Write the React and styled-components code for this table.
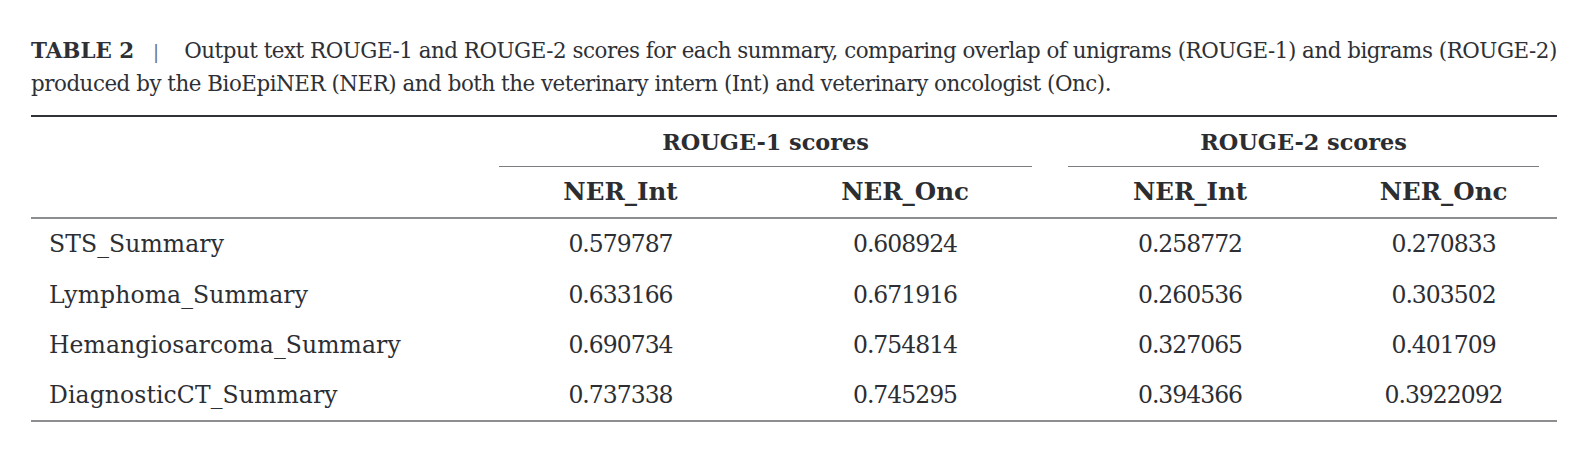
import React from "react";
import styled, { createGlobalStyle } from "styled-components";

const Global = createGlobalStyle`
  html, body { margin: 0; padding: 0; background: #ffffff; }
  body { font-family: "DejaVu Serif", serif; color: #2c2e33; }
`;

const Page = styled.div`
  width: 1592px;
  box-sizing: border-box;
  padding: 35px 35px 0 31px;
`;

const Caption = styled.p`
  margin: 0 0 15px 0;
  font-size: 21.4px;
  line-height: 32px;
  letter-spacing: -0.47px;
  color: #2e3035;
`;

const Label = styled.span`
  font-weight: bold;
  letter-spacing: 0;
`;

const Pipe = styled.span`
  margin: 0 25px 0 19px;
  color: #6a6c70;
  font-size: 18px;
  letter-spacing: 0;
`;

const NoBreak = styled.span`
  white-space: nowrap;
`;

const Table = styled.table`
  width: 1526px;
  table-layout: fixed;
  border-collapse: separate;
  border-spacing: 0;
`;

const Col = styled.col`
  width: ${(p) => p.$w}px;
`;

const HeadCell = styled.th`
  box-sizing: border-box;
  padding: 0 18px;
  font-weight: bold;
  text-align: center;
  color: #2b2d31;
  ${(p) => (p.$top ? "border-top: 2px solid #2f3237;" : "")}
  ${(p) => (p.$bottom ? "border-bottom: 2px solid #8d8e91;" : "")}
`;

const GroupCell = styled(HeadCell)`
  padding: 12px 18px 0 18px;
  vertical-align: top;
`;

const GroupTitle = styled.div`
  font-size: 22.4px;
  line-height: 27px;
  padding-bottom: 10px;
  border-bottom: 1px solid #7c7d80;
`;

const SubCell = styled(HeadCell)`
  font-size: 24.5px;
  line-height: 27px;
  padding: 11px 18px 12px 18px;
  vertical-align: bottom;
`;

const Cell = styled.td`
  box-sizing: border-box;
  padding: 12.3px 18px 11px 18px;
  font-size: 23.5px;
  line-height: 27px;
  color: #2c2e33;
  text-align: ${(p) => (p.$left ? "left" : "center")};
  letter-spacing: ${(p) => (p.$left ? "0.1px" : "-1px")};
  white-space: nowrap;
  ${(p) => (p.$last ? "border-bottom: 2px solid #8d8e91;" : "")}
`;

const rows = [
  ["STS_Summary", "0.579787", "0.608924", "0.258772", "0.270833"],
  ["Lymphoma_Summary", "0.633166", "0.671916", "0.260536", "0.303502"],
  ["Hemangiosarcoma_Summary", "0.690734", "0.754814", "0.327065", "0.401709"],
  ["DiagnosticCT_Summary", "0.737338", "0.745295", "0.394366", "0.3922092"],
];

export default function App() {
  return (
    <>
      <Global />
      <Page>
        <Caption>
          <Label>TABLE 2</Label>
          <Pipe>|</Pipe>
          Output text <NoBreak>ROUGE-1</NoBreak> and <NoBreak>ROUGE-2</NoBreak>{" "}
          scores for each summary, comparing overlap of unigrams{" "}
          <NoBreak>(ROUGE-1)</NoBreak> and bigrams <NoBreak>(ROUGE-2)</NoBreak>{" "}
          produced by the BioEpiNER (NER) and both the veterinary intern (Int)
          and veterinary oncologist (Onc).
        </Caption>
        <Table>
          <colgroup>
            <Col $w={450} />
            <Col $w={279} />
            <Col $w={290} />
            <Col $w={280} />
            <Col $w={227} />
          </colgroup>
          <thead>
            <tr>
              <HeadCell rowSpan={2} $top $bottom />
              <GroupCell colSpan={2} $top>
                <GroupTitle>ROUGE-1 scores</GroupTitle>
              </GroupCell>
              <GroupCell colSpan={2} $top>
                <GroupTitle>ROUGE-2 scores</GroupTitle>
              </GroupCell>
            </tr>
            <tr>
              <SubCell $bottom>NER_Int</SubCell>
              <SubCell $bottom>NER_Onc</SubCell>
              <SubCell $bottom>NER_Int</SubCell>
              <SubCell $bottom>NER_Onc</SubCell>
            </tr>
          </thead>
          <tbody>
            {rows.map((r, i) => (
              <tr key={r[0]}>
                {r.map((v, j) => (
                  <Cell key={j} $left={j === 0} $last={i === rows.length - 1}>
                    {v}
                  </Cell>
                ))}
              </tr>
            ))}
          </tbody>
        </Table>
      </Page>
    </>
  );
}
